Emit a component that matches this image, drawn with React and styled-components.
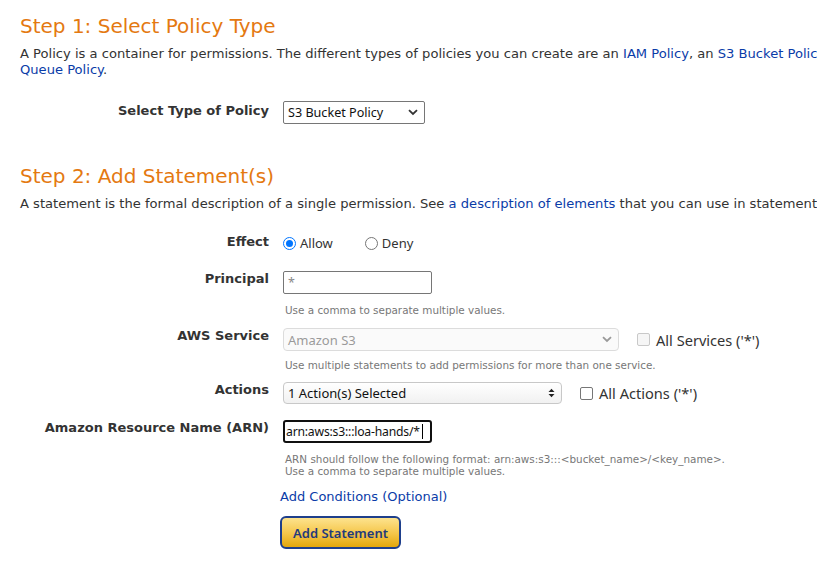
import React from "react";
import styled, { createGlobalStyle } from "styled-components";

const Global = createGlobalStyle`
  html, body { margin: 0; padding: 0; background: #fff; overflow: hidden; }
  body { font-family: "DejaVu Sans", Verdana, sans-serif; color: #333; }
`;

const Page = styled.div`
  width: 1100px;
  padding: 13px 20px 0 20px;
`;

const Heading = styled.h2`
  margin: 0;
  font-family: "DejaVu Sans", Verdana, sans-serif;
  font-weight: normal;
  font-size: 20px;
  line-height: 26px;
  color: #e47911;
  margin-top: ${(p) => p.$top || 0}px;
`;

const Desc = styled.p`
  margin: ${(p) => p.$top || 5}px 0 0 0;
  font-size: 13.1px;
  line-height: 16px;
  color: #333;
  white-space: nowrap;
`;

const Link = styled.a`
  color: #0a3ca8;
  text-decoration: none;
  cursor: pointer;
`;

const Row = styled.div`
  display: grid;
  grid-template-columns: 249px 1fr;
  column-gap: 14px;
  margin-top: ${(p) => p.$top || 0}px;
`;

const Label = styled.div`
  text-align: right;
  font-weight: bold;
  font-size: 13px;
  line-height: 16px;
  color: #333;
  padding-top: ${(p) => p.$pt || 0}px;
`;

const Control = styled.div`
  display: flex;
  flex-direction: column;
  align-items: flex-start;
`;

const Inline = styled.div`
  display: flex;
  align-items: center;
  gap: ${(p) => p.$gap || 0}px;
`;

const Help = styled.div`
  font-size: 10.4px;
  line-height: 12px;
  color: #777;
  margin-top: ${(p) => p.$top || 5}px;
  padding-left: 2px;
  white-space: nowrap;
`;

const uiFont = `"Noto Sans", "Open Sans", sans-serif`;

const SelectBox = styled.div`
  box-sizing: border-box;
  width: ${(p) => p.$w}px;
  height: ${(p) => p.$h || 23}px;
  display: flex;
  align-items: center;
  justify-content: space-between;
  padding: 0 6px 0 4px;
  font-family: ${uiFont};
  font-size: ${(p) => p.$fs || 13}px;
  color: ${(p) => (p.$disabled ? "#9a9a9a" : "#111")};
  border: 1px solid ${(p) => (p.$disabled ? "#dcdcdc" : p.$soft ? "#c8c8c8" : "#767676")};
  border-radius: ${(p) => (p.$soft ? 4 : 2)}px;
  background: ${(p) =>
    p.$disabled
      ? "#fafafa"
      : p.$soft
      ? "linear-gradient(#ffffff, #f1f1f1)"
      : "#fff"};
`;

const TextInput = styled.div`
  box-sizing: border-box;
  width: 149px;
  height: 23px;
  display: flex;
  align-items: center;
  white-space: nowrap;
  overflow: hidden;
  font-family: ${uiFont};
  font-size: ${(p) => (p.$focus ? 12.2 : 12.5)}px;
  letter-spacing: ${(p) => (p.$focus ? "-0.2px" : "0")};
  color: ${(p) => (p.$muted ? "#888" : "#111")};
  border: ${(p) => (p.$focus ? "2px solid #101010" : "1px solid #767676")};
  border-radius: ${(p) => (p.$focus ? 3 : 2)}px;
  padding-left: ${(p) => (p.$focus ? 1 : 4)}px;
`;

const Caret = styled.span`
  display: inline-block;
  flex: none;
  width: 1px;
  height: 15px;
  background: #000;
  margin-left: 2px;
`;

const OptionLabel = styled.label`
  display: inline-flex;
  align-items: center;
  gap: ${(p) => (p.$big ? 6 : 4)}px;
  font-family: ${uiFont};
  font-size: ${(p) => (p.$big ? 14.6 : 13)}px;
  color: #333;
  cursor: pointer;
`;

const Radio = styled.span`
  box-sizing: border-box;
  width: 13px;
  height: 13px;
  border-radius: 50%;
  border: 1px solid ${(p) => (p.$on ? "#0075ff" : "#767676")};
  display: inline-flex;
  align-items: center;
  justify-content: center;
  &::after {
    content: "";
    width: 7px;
    height: 7px;
    border-radius: 50%;
    background: ${(p) => (p.$on ? "#0075ff" : "transparent")};
  }
`;

const Check = styled.span`
  box-sizing: border-box;
  width: 13px;
  height: 13px;
  border-radius: 2px;
  border: 1px solid ${(p) => (p.$disabled ? "#c9c9c9" : "#767676")};
  background: ${(p) => (p.$disabled ? "#f6f6f6" : "#fff")};
`;

const CondLink = styled(Link)`
  font-size: 13px;
  line-height: 16px;
  margin-left: -3px;
  margin-top: ${(p) => p.$top || 0}px;
`;

const Button = styled.button`
  box-sizing: border-box;
  width: 121px;
  height: 33px;
  margin-left: -3px;
  margin-top: 11px;
  border: 2px solid #1e3f8c;
  border-radius: 6px;
  background: linear-gradient(#fde38e, #f4c548 55%, #e3a70c);
  font-family: ${uiFont};
  font-weight: 600;
  font-size: 13px;
  color: #233a7c;
  padding: 0;
  cursor: pointer;
`;

const Chevron = ({ color = "#333" }) => (
  <svg width="10" height="7" viewBox="0 0 10 7">
    <path d="M1 1.2 L5 5 L9 1.2" fill="none" stroke={color} strokeWidth="1.8" />
  </svg>
);

const UpDown = () => (
  <svg width="7" height="10" viewBox="0 0 7 10">
    <path d="M0.5 4 L3.5 0.8 L6.5 4 Z" fill="#222" />
    <path d="M0.5 6 L3.5 9.2 L6.5 6 Z" fill="#222" />
  </svg>
);

export default function App() {
  return (
    <Page>
      <Global />
      <Heading>Step 1: Select Policy Type</Heading>
      <Desc $top={7}>
        A Policy is a container for permissions. The different types of policies you can create
        are an <Link>IAM Policy</Link>, an <Link>S3 Bucket Policy</Link>, an{" "}
        <Link>SNS Topic Policy</Link>, a <Link>VPC Endpoint Policy</Link>, and an <Link>SQS</Link>
        <br />
        <Link>Queue Policy</Link>.
      </Desc>

      <Row $top={23}>
        <Label $pt={2}>Select Type of Policy</Label>
        <Control>
          <SelectBox $w={142} $fs={12.6}>
            <span>S3 Bucket Policy</span>
            <Chevron />
          </SelectBox>
        </Control>
      </Row>

      <Heading $top={39}>Step 2: Add Statement(s)</Heading>
      <Desc $top={7}>
        A statement is the formal description of a single permission. See{" "}
        <Link>a description of elements</Link> that you can use in statements.
      </Desc>

      <Row $top={22}>
        <Label>Effect</Label>
        <Control>
          <Inline $gap={32}>
            <OptionLabel>
              <Radio $on />
              Allow
            </OptionLabel>
            <OptionLabel>
              <Radio />
              Deny
            </OptionLabel>
          </Inline>
        </Control>
      </Row>

      <Row $top={19}>
        <Label>Principal</Label>
        <Control>
          <TextInput $muted>*</TextInput>
          <Help $top={10}>Use a comma to separate multiple values.</Help>
        </Control>
      </Row>

      <Row $top={12}>
        <Label>AWS Service</Label>
        <Control>
          <Inline $gap={18}>
            <SelectBox $w={336} $disabled $soft $fs={13}>
              <span>Amazon S3</span>
              <Chevron color="#999" />
            </SelectBox>
            <OptionLabel $big>
              <Check $disabled />
              All Services ('*')
            </OptionLabel>
          </Inline>
          <Help $top={8}>Use multiple statements to add permissions for more than one service.</Help>
        </Control>
      </Row>

      <Row $top={11}>
        <Label>Actions</Label>
        <Control>
          <Inline $gap={18}>
            <SelectBox $w={279} $h={22} $soft $fs={13}>
              <span>1 Action(s) Selected</span>
              <UpDown />
            </SelectBox>
            <OptionLabel $big>
              <Check />
              All Actions ('*')
            </OptionLabel>
          </Inline>
        </Control>
      </Row>

      <Row $top={16}>
        <Label>Amazon Resource Name (ARN)</Label>
        <Control>
          <TextInput $focus>
            arn:aws:s3:::loa-hands/*
            <Caret />
          </TextInput>
          <Help $top={10}>
            ARN should follow the following format: arn:aws:s3:::&lt;bucket_name&gt;/&lt;key_name&gt;.
            <br />
            Use a comma to separate multiple values.
          </Help>
          <CondLink $top={12}>Add Conditions (Optional)</CondLink>
          <Button>Add Statement</Button>
        </Control>
      </Row>
    </Page>
  );
}
